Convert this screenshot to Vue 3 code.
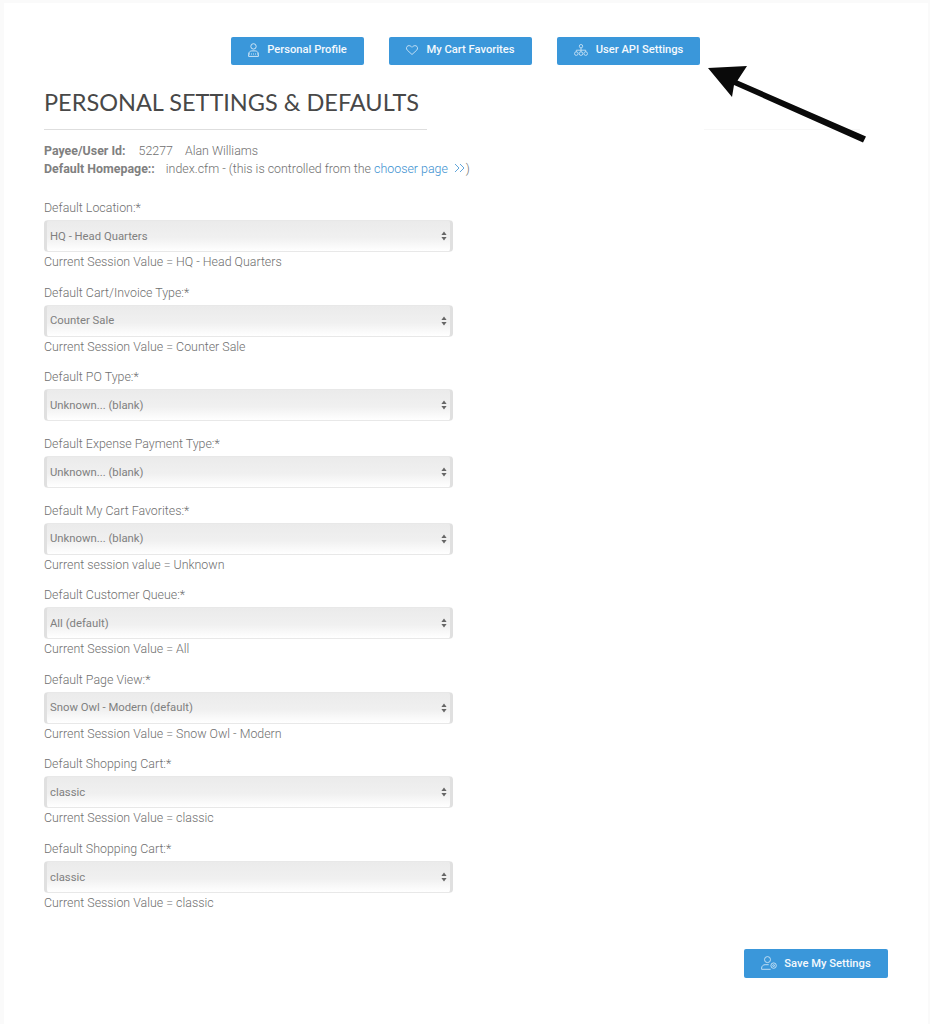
<script setup>
const buttons = [
  { label: 'Personal Profile', icon: 'user', width: 133 },
  { label: 'My Cart Favorites', icon: 'heart', width: 143 },
  { label: 'User API Settings', icon: 'api', width: 143 }
]
const fields = [
  { label: 'Default Location:*', value: 'HQ - Head Quarters', note: 'Current Session Value = HQ - Head Quarters' },
  { label: 'Default Cart/Invoice Type:*', value: 'Counter Sale', note: 'Current Session Value = Counter Sale' },
  { label: 'Default PO Type:*', value: 'Unknown... (blank)' },
  { label: 'Default Expense Payment Type:*', value: 'Unknown... (blank)' },
  { label: 'Default My Cart Favorites:*', value: 'Unknown... (blank)', note: 'Current session value = Unknown' },
  { label: 'Default Customer Queue:*', value: 'All (default)', note: 'Current Session Value = All' },
  { label: 'Default Page View:*', value: 'Snow Owl - Modern (default)', note: 'Current Session Value = Snow Owl - Modern' },
  { label: 'Default Shopping Cart:*', value: 'classic', note: 'Current Session Value = classic' },
  { label: 'Default Shopping Cart:*', value: 'classic', note: 'Current Session Value = classic' }
]
</script>

<template>
  <div class="page">
    <main class="card">
      <nav class="top-buttons">
        <button v-for="b in buttons" :key="b.label" class="btn top-btn" :style="{ width: b.width + 'px' }">
          <svg v-if="b.icon === 'user'" class="icon" viewBox="0 0 11 14" fill="none" stroke="currentColor" stroke-width="1">
            <circle cx="5.5" cy="3.4" r="2.7" />
            <path d="M.6 13.4v-2.2c0-2 1.6-3.3 3.2-3.3h3.4c1.6 0 3.2 1.3 3.2 3.3v2.2z" />
            <path d="M1 11h9" stroke-dasharray="1 1" />
          </svg>
          <svg v-else-if="b.icon === 'heart'" class="icon heart" viewBox="0 0 12 10" fill="none" stroke="currentColor" stroke-width="0.9">
            <path d="M6 9.5L1.3 5.2C-.1 3.8.3 1.4 2 .8 3.5.3 5 1 6 2.3 7 1 8.5.3 10 .8c1.7.6 2.1 3 .7 4.4z" />
          </svg>
          <svg v-else class="icon api" viewBox="0 0 14 12" fill="none" stroke="currentColor" stroke-width="0.85">
            <circle cx="7" cy="2.2" r="1.7" />
            <circle cx="2.3" cy="9.6" r="1.8" />
            <circle cx="7" cy="9.6" r="1.8" />
            <circle cx="11.7" cy="9.6" r="1.8" />
            <path d="M7 3.9v3.9M2.3 7.8V6.2h9.4v1.6" />
          </svg>
          <span>{{ b.label }}</span>
        </button>
      </nav>

      <h1 class="title">PERSONAL SETTINGS &amp; DEFAULTS</h1>
      <div class="rules">
        <hr class="rule main-rule" />
        <hr class="rule side-rule" />
      </div>

      <div class="info">
        <p><b>Payee/User Id:</b><span class="id">52277</span><span class="name">Alan Williams</span></p>
        <p>
          <b>Default Homepage::</b><span class="home">index.cfm - (this is controlled from the <a href="#" class="link">chooser page</a></span>
          <svg class="chev" viewBox="0 0 12 10" fill="none" stroke="#3a8fd0" stroke-width="0.8">
            <path d="M1 1l4 4-4 4M6 1l4 4-4 4" />
          </svg><span>)</span>
        </p>
      </div>

      <form class="form" @submit.prevent>
        <div v-for="(f, i) in fields" :key="i" class="field">
          <label class="field-label">{{ f.label }}</label>
          <div class="select-wrap">
            <select class="select">
              <option>{{ f.value }}</option>
            </select>
            <svg class="updown" viewBox="0 0 6 10" fill="#666">
              <path d="M3 .5L5.6 4H.4zM3 9.5L.4 6h5.2z" />
            </svg>
          </div>
          <div v-if="f.note" class="note">{{ f.note }}</div>
        </div>

        <div class="actions">
          <button class="btn save">
            <svg class="icon save-icon" viewBox="0 0 16 14" fill="none" stroke="currentColor" stroke-width="0.9">
              <circle cx="6.5" cy="3.6" r="3" />
              <path d="M.6 13.3v-1.2c0-2 1.7-3.4 3.5-3.4h3.6M.6 13.3h9" />
              <circle cx="12.6" cy="9.6" r="2.7" />
              <circle cx="12.6" cy="9.6" r="0.9" />
            </svg>
            <span>Save My Settings</span>
          </button>
        </div>
      </form>

      <svg class="arrow" viewBox="0 0 930 160" aria-hidden="true">
        <path d="M708 68L747 66 737.5 80.5 866 136.5 863 142.5 734 85 732 97z" fill="#0a0a0a" />
      </svg>
    </main>
  </div>
</template>

<style>
html, body {
  margin: 0;
  background: #fafafa;
}
</style>

<style scoped>
.page {
  width: 930px;
  height: 1024px;
  box-sizing: border-box;
  padding: 3px 0 0 4px;
  background: #fafafa;
  overflow: hidden;
  font-family: Roboto, "Liberation Sans", sans-serif;
  color: #6f6f6f;
  font-size: 12.4px;
  font-weight: 300;
}
.card {
  position: relative;
  width: 924px;
  height: 1021px;
  box-sizing: border-box;
  background: #fff;
  padding: 34px 0 0 40px;
}
.top-buttons {
  display: flex;
  gap: 25px;
  margin-left: 187px;
}
.btn {
  height: 28px;
  padding: 0;
  border: 0;
  border-radius: 2px;
  background: #3a97da;
  color: #f4f9fd;
  display: flex;
  align-items: center;
  justify-content: center;
  gap: 8px;
  font-family: inherit;
  font-size: 11.2px;
  font-weight: 500;
}
.top-btn {
  padding-bottom: 3px;
}
.icon {
  width: 11px;
  height: 14px;
  color: #cfe5f6;
  flex: none;
}
.heart {
  width: 12px;
  height: 10px;
}
.api {
  width: 14px;
  height: 12px;
}
.title {
  margin: 23px 0 0;
  font-family: Lato, "Open Sans", sans-serif;
  font-weight: 400;
  font-size: 23.5px;
  line-height: 28px;
  color: #484848;
}
.rules {
  display: flex;
  margin-top: 13px;
}
.rule {
  margin: 0;
  border: 0;
  height: 1px;
}
.main-rule {
  width: 383px;
  background: #dedede;
}
.side-rule {
  width: 156px;
  margin-left: 277px;
  background: #f7f7f7;
}
.info {
  margin-top: 12px;
  line-height: 18px;
}
.info p {
  margin: 0;
  white-space: nowrap;
}
.info b {
  font-weight: 700;
  color: #808080;
}
.id {
  margin-left: 13px;
}
.name {
  margin-left: 12px;
}
.home {
  margin-left: 11px;
}
.link {
  color: #3a8fd0;
  text-decoration: none;
}
.chev {
  width: 12px;
  height: 10px;
  margin: 0 0 0 6px;
}
.form {
  margin-top: 19.3px;
}
.field {
  width: 409px;
  margin-bottom: 11.6px;
}
.field-label {
  display: block;
  height: 20px;
  line-height: 21px;
  margin-bottom: 3px;
}
.select-wrap {
  position: relative;
  height: 32px;
}
.select {
  display: block;
  width: 100%;
  height: 32px;
  box-sizing: border-box;
  appearance: none;
  border: 1px solid #e8e8e8;
  border-left: 3px solid #e0e0e0;
  border-right: 3px solid #e0e0e0;
  border-radius: 4px;
  padding: 0 0 0 3px;
  background: linear-gradient(#ebebeb 0%, #f0f0f0 55%, #ffffff 100%);
  font-family: inherit;
  font-size: 11.3px;
  font-weight: 400;
  color: #808080;
}
.updown {
  position: absolute;
  right: 6px;
  top: 11px;
  width: 6px;
  height: 10px;
  pointer-events: none;
}
.note {
  height: 18px;
  line-height: 20px;
}
.actions {
  display: flex;
  justify-content: flex-end;
  width: 844px;
  margin-top: 37.5px;
}
.save {
  width: 144px;
  height: 29px;
  gap: 7px;
}
.save-icon {
  width: 16px;
  height: 14px;
}
.arrow {
  position: absolute;
  left: -4px;
  top: -3px;
  width: 930px;
  height: 160px;
  pointer-events: none;
}
</style>
